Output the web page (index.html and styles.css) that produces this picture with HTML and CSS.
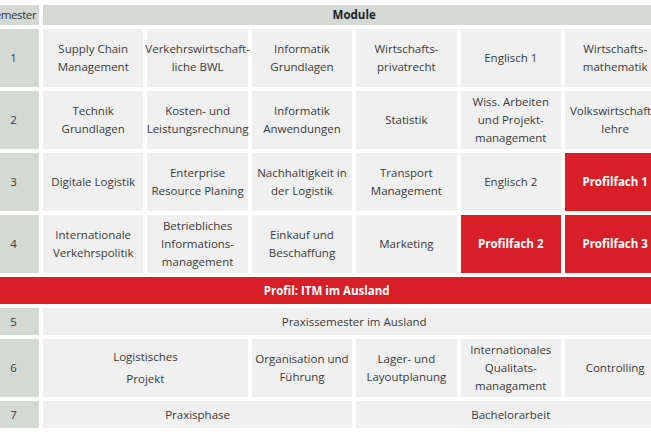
FILE: index.html
```html
<!DOCTYPE html>
<html lang="de">
<head>
<meta charset="utf-8">
<title>Module</title>
<link rel="stylesheet" href="styles.css">
</head>
<body>
<div class="plan">
  <div class="sem head">Semester</div>
  <div class="modhead">Module</div>

  <div class="sem">1</div>
  <div class="cell">Supply Chain<br>Management</div>
  <div class="cell">Verkehrswirtschaft-<br>liche BWL</div>
  <div class="cell">Informatik<br>Grundlagen</div>
  <div class="cell">Wirtschafts-<br>privatrecht</div>
  <div class="cell">Englisch 1</div>
  <div class="cell">Wirtschafts-<br>mathematik</div>

  <div class="sem">2</div>
  <div class="cell">Technik<br>Grundlagen</div>
  <div class="cell">Kosten- und<br>Leistungsrechnung</div>
  <div class="cell">Informatik<br>Anwendungen</div>
  <div class="cell">Statistik</div>
  <div class="cell">Wiss. Arbeiten<br>und Projekt-<br>management</div>
  <div class="cell">Volkswirtschafts-<br>lehre</div>

  <div class="sem">3</div>
  <div class="cell">Digitale Logistik</div>
  <div class="cell">Enterprise<br>Resource Planing</div>
  <div class="cell">Nachhaltigkeit in<br>der Logistik</div>
  <div class="cell">Transport<br>Management</div>
  <div class="cell">Englisch 2</div>
  <div class="cell red">Profilfach 1</div>

  <div class="sem">4</div>
  <div class="cell">Internationale<br>Verkehrspolitik</div>
  <div class="cell">Betriebliches<br>Informations-<br>management</div>
  <div class="cell">Einkauf und<br>Beschaffung</div>
  <div class="cell">Marketing</div>
  <div class="cell red">Profilfach 2</div>
  <div class="cell red">Profilfach 3</div>

  <div class="band">Profil: ITM im Ausland</div>

  <div class="sem">5</div>
  <div class="cell span6">Praxissemester im Ausland</div>

  <div class="sem">6</div>
  <div class="cell span2 loose">Logistisches<br>Projekt</div>
  <div class="cell">Organisation und<br>Führung</div>
  <div class="cell">Lager- und<br>Layoutplanung</div>
  <div class="cell">Internationales<br>Qualitats-<br>managament</div>
  <div class="cell">Controlling</div>

  <div class="sem">7</div>
  <div class="cell span3">Praxisphase</div>
  <div class="cell span3">Bachelorarbeit</div>
</div>
</body>
</html>
```

FILE: styles.css
```css
html, body {
  margin: 0;
  padding: 0;
  background: #ffffff;
  overflow: hidden;
}

body {
  width: 651px;
  height: 434px;
  font-family: "Open Sans", "Noto Sans", sans-serif;
  font-size: 11.5px;
  color: #3a3a3a;
}

.plan {
  display: grid;
  grid-template-columns: 51px repeat(6, 100.4px);
  grid-template-rows: 20px 58px 58px 58px 58px 27px 27px 58px 27px;
  column-gap: 4px;
  row-gap: 4px;
  margin-left: -12px;
  padding-top: 5px;
  width: 680px;
}

.plan > div {
  display: flex;
  align-items: center;
  justify-content: center;
  text-align: center;
  line-height: 18px;
  white-space: nowrap;
}

.sem {
  background: #d4d9d3;
  color: #3a3a3a;
}

.sem.head {
  color: #333333;
  letter-spacing: -0.4px;
  padding-right: 2px;
}

.modhead {
  grid-column: 2 / 8;
  background: #d4d9d3;
  font-weight: 700;
  color: #222222;
}

.cell {
  background: #f0f0f0;
}

.cell.red {
  background: #d81e27;
  color: #ffffff;
  font-weight: 700;
}

.band {
  grid-column: 1 / 8;
  background: #d81e27;
  color: #ffffff;
  font-weight: 700;
}

.span6 {
  grid-column: 2 / 8;
}

.span3 {
  grid-column: span 3;
}

.span2 {
  grid-column: span 2;
}

.loose {
  line-height: 22px !important;
}
```
